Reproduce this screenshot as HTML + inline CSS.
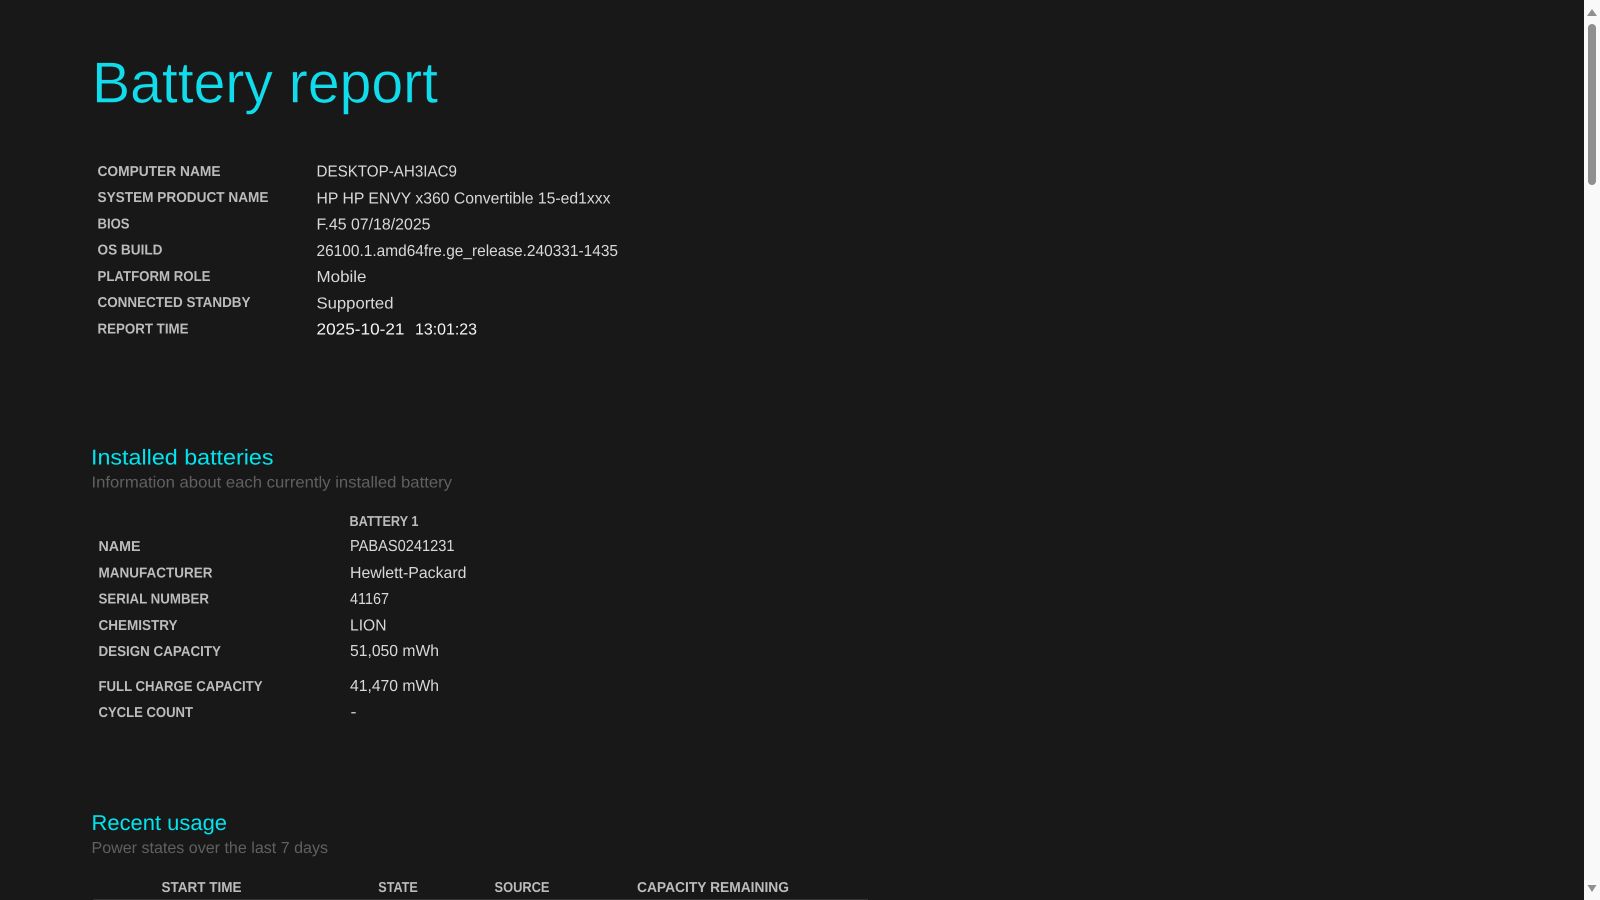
<!DOCTYPE html>
<html lang="en">
<head>
<meta charset="utf-8">
<title>Battery report</title>
<style>
html,body{margin:0;padding:0;width:1600px;height:900px;overflow:hidden;background:#181818}
svg{position:absolute;left:0;top:0;display:block}
text{font-family:"Liberation Sans",Arial,sans-serif;white-space:pre;text-rendering:geometricPrecision}
.t{font-size:58px;fill:#10dcec;stroke:#181818;stroke-width:.5px}
.l{font-size:14.4px;font-weight:bold;fill:#bcbcbc}
.v{font-size:16px;fill:#d8d8d8}
.h{font-size:21.5px;fill:#00e4ee}
.s{font-size:16px;fill:#606060}
</style>
</head>
<body>
<svg width="1600" height="900" viewBox="0 0 1600 900" xmlns="http://www.w3.org/2000/svg">
<rect width="1600" height="900" fill="#181818"/>

<text class="t" x="92" y="102.5" textLength="346" lengthAdjust="spacingAndGlyphs">Battery report</text>

<text class="l" x="97.5" y="176.2" textLength="123" lengthAdjust="spacingAndGlyphs">COMPUTER NAME</text>
<text class="l" x="97.5" y="202.2" textLength="171" lengthAdjust="spacingAndGlyphs">SYSTEM PRODUCT NAME</text>
<text class="l" x="97.5" y="228.3" textLength="32" lengthAdjust="spacingAndGlyphs">BIOS</text>
<text class="l" x="97.5" y="254.3" textLength="65" lengthAdjust="spacingAndGlyphs">OS BUILD</text>
<text class="l" x="97.5" y="281" textLength="113" lengthAdjust="spacingAndGlyphs">PLATFORM ROLE</text>
<text class="l" x="97.5" y="307" textLength="153" lengthAdjust="spacingAndGlyphs">CONNECTED STANDBY</text>
<text class="l" x="97.5" y="333.3" textLength="91" lengthAdjust="spacingAndGlyphs">REPORT TIME</text>

<text class="v" x="316.5" y="176.7" textLength="140.5" lengthAdjust="spacingAndGlyphs">DESKTOP-AH3IAC9</text>
<text class="v" x="316.5" y="203.3" textLength="294" lengthAdjust="spacingAndGlyphs">HP HP ENVY x360 Convertible 15-ed1xxx</text>
<text class="v" x="316.5" y="229.3" textLength="114" lengthAdjust="spacingAndGlyphs">F.45 07/18/2025</text>
<text class="v" x="316.5" y="255.8" textLength="301.5" lengthAdjust="spacingAndGlyphs">26100.1.amd64fre.ge_release.240331-1435</text>
<text class="v" x="316.5" y="282" textLength="50" lengthAdjust="spacingAndGlyphs">Mobile</text>
<text class="v" x="316.5" y="308.5" textLength="77" lengthAdjust="spacingAndGlyphs">Supported</text>
<text class="v" x="316.5" y="334.5" textLength="88" lengthAdjust="spacingAndGlyphs" style="fill:#f4f4f4">2025-10-21</text>
<text class="v" x="415" y="334.5" textLength="62" lengthAdjust="spacingAndGlyphs" style="fill:#f4f4f4">13:01:23</text>

<text class="h" x="91" y="464.5" textLength="182.5" lengthAdjust="spacingAndGlyphs">Installed batteries</text>
<text class="s" x="91.5" y="487.5" textLength="360.5" lengthAdjust="spacingAndGlyphs">Information about each currently installed battery</text>

<text class="l" x="349.5" y="525.8" textLength="69" lengthAdjust="spacingAndGlyphs">BATTERY 1</text>

<text class="l" x="98.5" y="550.8" textLength="42" lengthAdjust="spacingAndGlyphs">NAME</text>
<text class="l" x="98.5" y="577.3" textLength="114" lengthAdjust="spacingAndGlyphs">MANUFACTURER</text>
<text class="l" x="98.5" y="603.3" textLength="110.5" lengthAdjust="spacingAndGlyphs">SERIAL NUMBER</text>
<text class="l" x="98.5" y="630.2" textLength="79" lengthAdjust="spacingAndGlyphs">CHEMISTRY</text>
<text class="l" x="98.5" y="656.2" textLength="122.5" lengthAdjust="spacingAndGlyphs">DESIGN CAPACITY</text>
<text class="l" x="98.5" y="690.8" textLength="164" lengthAdjust="spacingAndGlyphs">FULL CHARGE CAPACITY</text>
<text class="l" x="98.5" y="716.8" textLength="94.5" lengthAdjust="spacingAndGlyphs">CYCLE COUNT</text>

<text class="v" x="350" y="551.2" textLength="104.5" lengthAdjust="spacingAndGlyphs">PABAS0241231</text>
<text class="v" x="350" y="577.8" textLength="116.5" lengthAdjust="spacingAndGlyphs">Hewlett-Packard</text>
<text class="v" x="350" y="603.8" textLength="39" lengthAdjust="spacingAndGlyphs">41167</text>
<text class="v" x="350" y="630.3" textLength="36.5" lengthAdjust="spacingAndGlyphs">LION</text>
<text class="v" x="350" y="656" textLength="89" lengthAdjust="spacingAndGlyphs">51,050 mWh</text>
<text class="v" x="350" y="691" textLength="89" lengthAdjust="spacingAndGlyphs">41,470 mWh</text>
<text class="v" x="350.5" y="717" textLength="6" lengthAdjust="spacingAndGlyphs">-</text>

<text class="h" x="91.5" y="830" textLength="135.5" lengthAdjust="spacingAndGlyphs">Recent usage</text>
<text class="s" x="91.5" y="853" textLength="236.5" lengthAdjust="spacingAndGlyphs">Power states over the last 7 days</text>

<text class="l" x="161.5" y="891.8" textLength="80" lengthAdjust="spacingAndGlyphs">START TIME</text>
<text class="l" x="378.3" y="891.8" textLength="39.5" lengthAdjust="spacingAndGlyphs">STATE</text>
<text class="l" x="494.5" y="891.8" textLength="55" lengthAdjust="spacingAndGlyphs">SOURCE</text>
<text class="l" x="637" y="891.8" textLength="152" lengthAdjust="spacingAndGlyphs">CAPACITY REMAINING</text>

<rect x="93" y="899" width="775" height="1" fill="#333333"/>

<rect x="1584" y="0" width="16" height="900" fill="#f9f9f9"/>
<rect x="1588" y="24" width="8" height="161" rx="4" fill="#8f8f8f"/>
<path d="M1592 9 L1597 16 L1587 16 Z" fill="#8f8f8f"/>
<path d="M1587.5 885 L1596.5 885 L1592 892 Z" fill="#8f8f8f"/>
</svg>
</body>
</html>
